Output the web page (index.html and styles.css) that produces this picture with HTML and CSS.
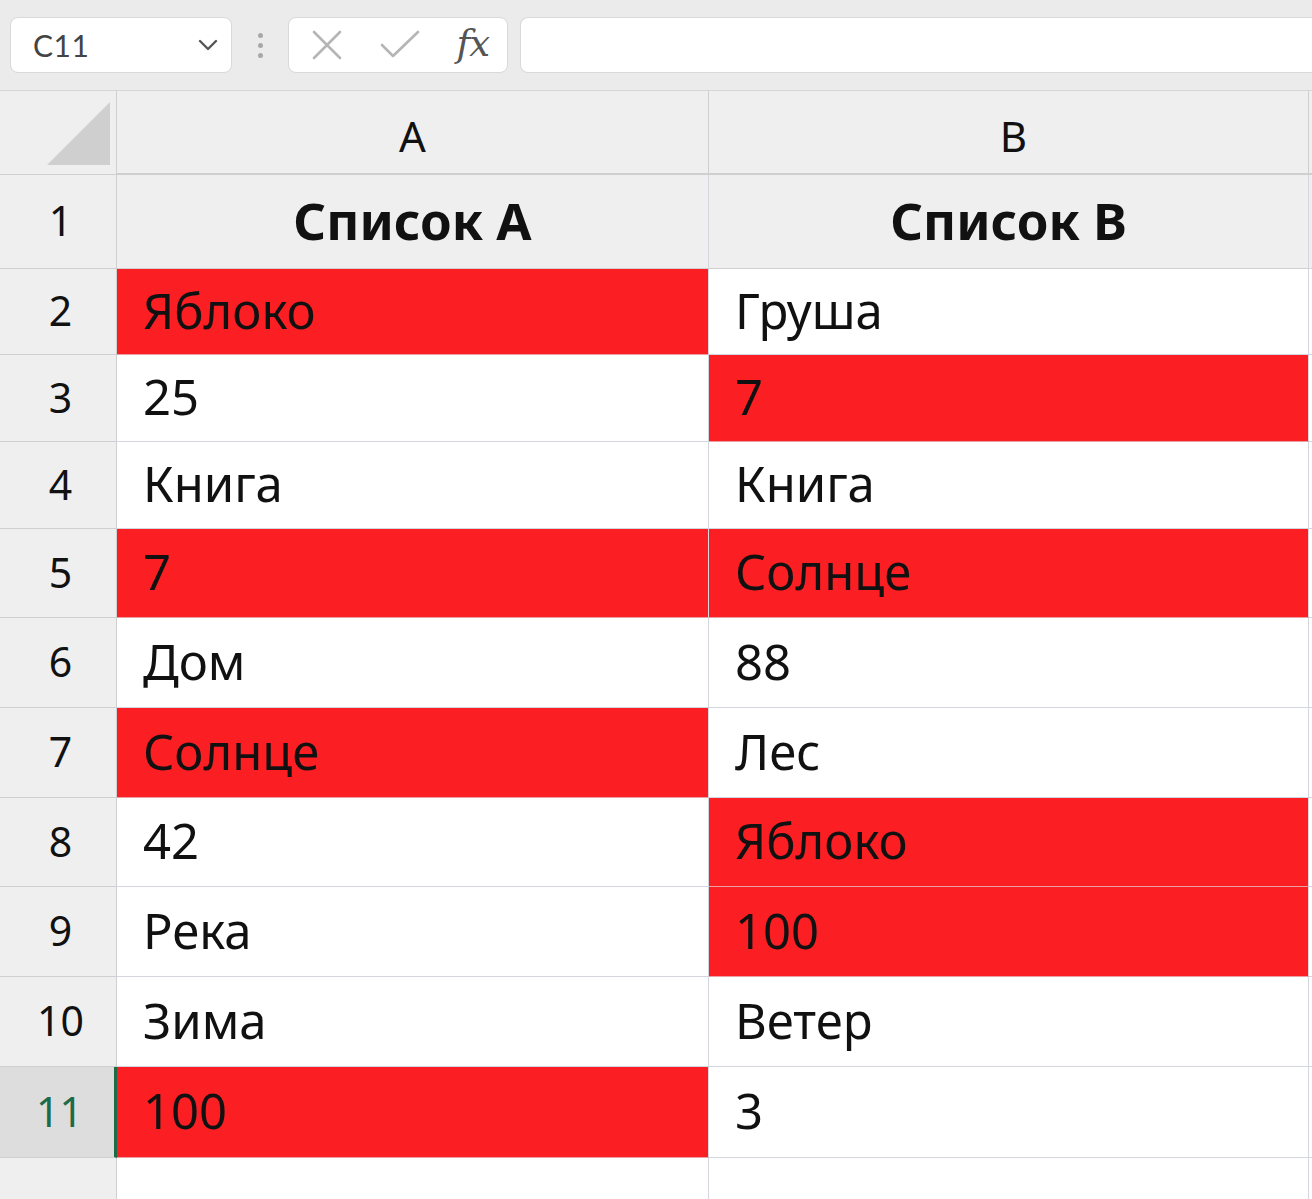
FILE: index.html
```html
<!DOCTYPE html>
<html lang="ru">
<head>
<meta charset="utf-8">
<title>Sheet</title>
<link rel="stylesheet" href="styles.css">
</head>
<body>
<div class="topbar">
  <div class="namebox">
    <span class="ref">C11</span>
    <svg class="chev" width="22" height="14" viewBox="0 0 22 14"><polyline points="3,3 11,11 19,3" fill="none" stroke="#555" stroke-width="2.4" stroke-linecap="round" stroke-linejoin="round"/></svg>
  </div>
  <div class="dots"><span></span><span></span><span></span></div>
  <div class="fbtns">
    <svg class="ico" width="34" height="34" viewBox="0 0 34 34"><path d="M4 4 L30 30 M30 4 L4 30" stroke="#b5b5b5" stroke-width="2.6" stroke-linecap="round" fill="none"/></svg>
    <svg class="ico" width="42" height="34" viewBox="0 0 42 34"><polyline points="3,17 14,28 39,4" stroke="#b5b5b5" stroke-width="2.6" stroke-linecap="round" stroke-linejoin="round" fill="none"/></svg>
    <span class="fx">fx</span>
  </div>
  <div class="finput"></div>
</div>
<div class="sheet">
  <div class="corner"><svg width="116" height="82" viewBox="0 0 116 82"><polygon points="47,74 110,74 110,11" fill="#cfcfcf"/></svg></div>
  <div class="colhdr">A</div>
  <div class="colhdr">B</div>
  <div class="colhdr c"></div>

  <div class="rowhdr r1">1</div><div class="cell head r1">Список А</div><div class="cell head r1">Список В</div><div class="cell c r1"></div>
  <div class="rowhdr r2">2</div><div class="cell red r2">Яблоко</div><div class="cell r2">Груша</div><div class="cell c r2"></div>
  <div class="rowhdr r3">3</div><div class="cell r3">25</div><div class="cell red r3">7</div><div class="cell c r3"></div>
  <div class="rowhdr r4">4</div><div class="cell r4">Книга</div><div class="cell r4">Книга</div><div class="cell c r4"></div>
  <div class="rowhdr r5">5</div><div class="cell red r5">7</div><div class="cell red r5">Солнце</div><div class="cell c r5"></div>
  <div class="rowhdr r6">6</div><div class="cell r6">Дом</div><div class="cell r6">88</div><div class="cell c r6"></div>
  <div class="rowhdr r7">7</div><div class="cell red r7">Солнце</div><div class="cell r7">Лес</div><div class="cell c r7"></div>
  <div class="rowhdr r8">8</div><div class="cell r8">42</div><div class="cell red r8">Яблоко</div><div class="cell c r8"></div>
  <div class="rowhdr r9">9</div><div class="cell r9">Река</div><div class="cell red r9">100</div><div class="cell c r9"></div>
  <div class="rowhdr r10">10</div><div class="cell r10">Зима</div><div class="cell r10">Ветер</div><div class="cell c r10"></div>
  <div class="rowhdr r11 sel">11</div><div class="cell red r11">100</div><div class="cell r11">3</div><div class="cell c r11"></div>
  <div class="rowhdr r12"></div><div class="cell r12"></div><div class="cell r12"></div><div class="cell c r12"></div>
</div>
</body>
</html>
```

FILE: styles.css
```css
html, body {
  margin: 0;
  padding: 0;
  background: #ffffff;
  font-family: "Noto Sans", "Open Sans", "DejaVu Sans", sans-serif;
  color: #111;
  overflow: hidden;
}

.topbar {
  height: 90px;
  background: #ebebeb;
  border-bottom: 1px solid #d6d6d6;
  display: flex;
  align-items: center;
  padding-left: 10px;
  gap: 0;
  box-sizing: content-box;
}

.namebox {
  width: 222px;
  height: 56px;
  box-sizing: border-box;
  background: #fff;
  border: 1px solid #d9d9d9;
  border-radius: 8px;
  display: flex;
  align-items: center;
  justify-content: space-between;
  padding: 0 12px 0 22px;
}

.ref {
  font-family: Lato, "Noto Sans", sans-serif;
  font-size: 30px;
  color: #444;
  letter-spacing: 0.5px;
}

.chev { display: block; }

.dots {
  width: 56px;
  display: flex;
  flex-direction: column;
  align-items: center;
  gap: 5px;
}
.dots span {
  width: 5px;
  height: 5px;
  border-radius: 50%;
  background: #a8a8a8;
}

.fbtns {
  width: 220px;
  height: 56px;
  box-sizing: border-box;
  background: #fff;
  border: 1px solid #d9d9d9;
  border-radius: 8px;
  display: flex;
  align-items: center;
  padding: 0 18px 0 21px;
  justify-content: space-between;
}
.ico { display: block; }
.fx {
  font-family: "DejaVu Serif", "Liberation Serif", serif;
  font-style: italic;
  font-size: 37px;
  color: #555;
  letter-spacing: -1px;
  line-height: 1;
  margin-bottom: 4px;
}

.finput {
  margin-left: 12px;
  flex: 1;
  height: 56px;
  box-sizing: border-box;
  background: #fff;
  border: 1px solid #d9d9d9;
  border-right: none;
  border-radius: 8px 0 0 8px;
}

.sheet {
  display: grid;
  grid-template-columns: 117px 592px 600px 1fr;
  grid-template-rows: 84px 94px 86px 87px 87px 89px 90px 90px 89px 90px 90px 91px 60px;
}

.corner, .colhdr, .rowhdr {
  background: #efefef;
  box-sizing: border-box;
  border-right: 1px solid #cfcfcf;
  border-bottom: 1px solid #cfcfcf;
}
.corner svg { display: block; }

.colhdr {
  display: flex;
  align-items: center;
  justify-content: center;
  font-size: 42px;
  padding-top: 6px;
  color: #111;
  border-bottom: 2px solid #cfcfcf;
}
.colhdr + .colhdr { padding-left: 10px; }
.colhdr.c { border-right: none; padding-left: 0; }

.rowhdr {
  display: flex;
  align-items: center;
  justify-content: center;
  font-size: 41px;
  padding-left: 5px;
  padding-bottom: 3px;
  color: #111;
}
.rowhdr.sel {
  background: #dddddd;
  color: #1e6b48;
  border-right: 3px solid #1e6b48;
}

.cell {
  box-sizing: border-box;
  border-right: 1px solid #d3d6de;
  border-bottom: 1px solid #d3d6de;
  display: flex;
  align-items: center;
  padding-left: 26px;
  padding-bottom: 4px;
  font-size: 49px;
  white-space: nowrap;
  overflow: hidden;
  background: #fff;
}
.cell.c { border-right: none; padding: 0; }

.cell.head {
  background: #efefef;
  font-weight: 700;
  font-size: 51px;
  justify-content: center;
  padding-left: 0;
  border-bottom-color: #d0d0d0;
}
.cell.c.r1 { background: #efefef; }

.cell.red {
  background: #fb1f23;
  border-bottom-color: #e8a0a2;
}
```
